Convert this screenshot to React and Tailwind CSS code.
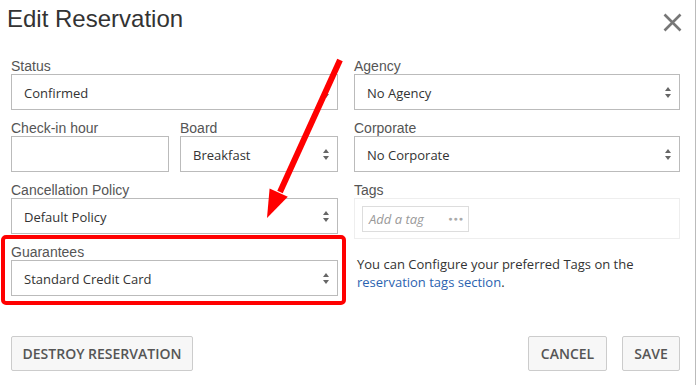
import React from 'react'

const label = "block h-4 text-[14px] leading-4 text-[#555] font-['Liberation_Sans',Arial,sans-serif]"
const box = "flex h-9 items-center justify-between border border-[#bbb] bg-white pl-3 pr-2 text-[13px] text-[#333] font-['Open_Sans',sans-serif]"

function Arrows(){
  return (
    <svg width="6" height="11" viewBox="0 0 6 11" className="shrink-0">
      <path d="M3 0 L6 4 L0 4 Z" fill="#666" />
      <path d="M0 7 L6 7 L3 11 Z" fill="#666" />
    </svg>
  )
}

function Select({ title, value }){
  return (
    <div>
      <span className={label}>{title}</span>
      <div className={box}>
        <span className="pt-[4px]">{value}</span>
        <Arrows />
      </div>
    </div>
  )
}

const btn = "h-[35px] rounded-[2px] border border-[#ccc] bg-[#f7f7f7] text-[14px] font-semibold text-[#555] font-['Open_Sans',sans-serif]"

export default function App(){
  return (
    <div className="relative h-[385px] w-[697px] overflow-hidden bg-white">
      <div className="h-full w-[696px] border-r border-[#bbb] pl-[11px] pr-[15px]">
        <div className="flex items-start justify-between pt-[5px]">
          <h1 className="-ml-1 text-[24px] leading-[28px] text-[#333] font-['Liberation_Sans',Arial,sans-serif]">Edit Reservation</h1>
          <svg width="19" height="19" viewBox="0 0 19 19" className="mt-[8px] -mr-[2px]">
            <path d="M1.5 1.5 L17.5 17.5 M17.5 1.5 L1.5 17.5" stroke="#777" strokeWidth="2.6" />
          </svg>
        </div>

        <div className="mt-[25px] grid grid-cols-[327px_326px] gap-x-4">
          <div className="flex flex-col gap-[10px]">
            <Select title="Status" value="Confirmed" />
            <div className="grid grid-cols-2 gap-x-[11px]">
              <div>
                <span className={label}>Check-in hour</span>
                <div className="h-9 border border-[#bbb] bg-white" />
              </div>
              <Select title="Board" value="Breakfast" />
            </div>
            <Select title="Cancellation Policy" value="Default Policy" />
            <Select title="Guarantees" value="Standard Credit Card" />
          </div>

          <div className="flex flex-col gap-[10px]">
            <Select title="Agency" value="No Agency" />
            <Select title="Corporate" value="No Corporate" />
            <div>
              <span className={label}>Tags</span>
              <div className="h-[41px] border border-[#eee] p-[7px]">
                <div className="flex h-[26px] w-[107px] items-center justify-between border border-[#ddd] pl-[6px] pr-[4px] text-[13px] italic text-[#999] font-['Open_Sans',sans-serif]">
                  <span className="pt-[2px]">Add a tag</span>
                  <span className="not-italic text-[7px] tracking-[1px] text-[#aaa]">●●●</span>
                </div>
              </div>
              <p className="ml-[3px] mt-[16px] text-[13px] leading-[18px] text-[#333] font-['Open_Sans',sans-serif]">
                You can Configure your preferred Tags on the <a className="text-[#2b63b0]">reservation tags section</a>.
              </p>
            </div>
          </div>
        </div>

        <div className="mt-[40px] flex items-center justify-between">
          <button className={`${btn} w-[182px]`}>DESTROY RESERVATION</button>
          <div className="flex gap-[15px]">
            <button className={`${btn} w-[79px]`}>CANCEL</button>
            <button className={`${btn} w-[58px]`}>SAVE</button>
          </div>
        </div>
      </div>

      <div className="pointer-events-none absolute left-[1px] top-[235px] h-[70px] w-[345px] rounded-[5px] border-[4px] border-[#ff0000]" />
      <svg className="pointer-events-none absolute left-0 top-0" width="697" height="385">
        <line x1="340" y1="60" x2="280" y2="192" stroke="#ff0000" strokeWidth="6" />
        <path d="M267 218 L269.6 188.4 L287.8 196.8 Z" fill="#ff0000" />
      </svg>
    </div>
  )
}
